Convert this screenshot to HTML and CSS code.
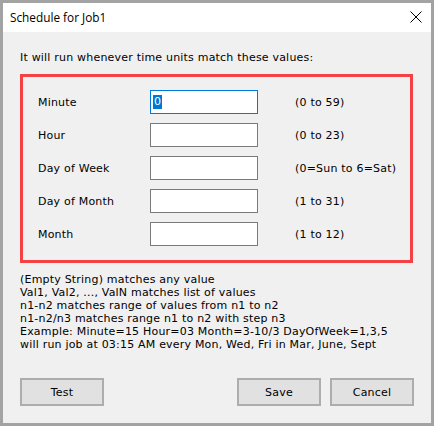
FILE: index.html
```html
<!DOCTYPE html>
<html>
<head>
<meta charset="utf-8">
<link rel="stylesheet" href="styles.css">
</head>
<body>
<div class="window">
  <div class="titlebar">
    <span class="title">Schedule for Job1</span>
    <svg class="close" width="12" height="12" viewBox="0 0 12 12"><path d="M0.5 0.5 L11.5 11.5 M11.5 0.5 L0.5 11.5" stroke="#000" stroke-width="1" fill="none"/></svg>
  </div>
  <div class="content">
    <div class="intro">It will run whenever time units match these values:</div>
    <div class="fields">
      <div class="row"><span class="label">Minute</span><div class="input focused"><span class="sel">0</span></div><span class="range">(0 to 59)</span></div>
      <div class="row"><span class="label">Hour</span><div class="input"></div><span class="range">(0 to 23)</span></div>
      <div class="row"><span class="label">Day of Week</span><div class="input"></div><span class="range">(0=Sun to 6=Sat)</span></div>
      <div class="row"><span class="label">Day of Month</span><div class="input"></div><span class="range">(1 to 31)</span></div>
      <div class="row"><span class="label">Month</span><div class="input"></div><span class="range">(1 to 12)</span></div>
    </div>
    <div class="help">
      <div>(Empty String) matches any value</div>
      <div>Val1, Val2, ..., ValN matches list of values</div>
      <div>n1-n2 matches range of values from n1 to n2</div>
      <div>n1-n2/n3 matches range n1 to n2 with step n3</div>
      <div>Example: Minute=15 Hour=03 Month=3-10/3 DayOfWeek=1,3,5</div>
      <div>will run job at 03:15 AM every Mon, Wed, Fri in Mar, June, Sept</div>
    </div>
    <div class="buttons">
      <button class="btn">Test</button>
      <div class="spacer"></div>
      <button class="btn">Save</button>
      <button class="btn">Cancel</button>
    </div>
  </div>
</div>
</body>
</html>
```
FILE: styles.css
```css
html, body {
  margin: 0;
  padding: 0;
}
body {
  width: 434px;
  height: 426px;
  background: #9d9d9d;
}
.window {
  box-sizing: border-box;
  width: 434px;
  height: 426px;
  border: 3px solid #a3a3a3;
  display: flex;
  flex-direction: column;
  font-family: "DejaVu Sans", Verdana, sans-serif;
  font-size: 11px;
  letter-spacing: 0.2px;
  color: #000;
}
.titlebar {
  height: 29px;
  background: #fff;
  display: flex;
  align-items: center;
  padding-left: 7px;
  padding-right: 9px;
}
.title {
  font-family: "Open Sans", "Noto Sans", sans-serif;
  font-size: 11.8px;
  letter-spacing: 0;
  flex: 1;
  padding-bottom: 1px;
}
.close {
  display: block;
  margin-top: -1px;
}
.content {
  flex: 1;
  background: #f0f0f0;
  padding: 19px 17px 17px 17px;
  display: flex;
  flex-direction: column;
}
.intro {
  height: 13px;
  line-height: 13px;
}
.fields {
  margin-top: 10px;
  margin-right: 1px;
  border: 3px solid #f44244;
  height: 189px;
  box-sizing: border-box;
  padding: 13px 0 0 15px;
  display: flex;
  flex-direction: column;
  gap: 9px;
}
.row {
  display: flex;
  align-items: center;
  height: 24px;
}
.label {
  width: 112px;
  flex: none;
}
.input {
  box-sizing: border-box;
  width: 108px;
  height: 24px;
  flex: none;
  background: #fff;
  border: 1px solid #7a7a7a;
  display: flex;
  align-items: center;
  padding-left: 2px;
}
.input.focused {
  border-color: #0078d7;
}
.sel {
  background: #0078d7;
  color: #fff;
  line-height: 14px;
  padding: 0 1px;
}
.range {
  margin-left: 37px;
}
.help {
  margin-top: 10px;
  line-height: 13px;
}
.buttons {
  margin-top: auto;
  display: flex;
  gap: 9px;
}
.spacer {
  flex: 1;
}
.btn {
  box-sizing: border-box;
  width: 84px;
  height: 28px;
  background: #e1e1e1;
  border: 2px solid #adadad;
  font-family: "DejaVu Sans", Verdana, sans-serif;
  font-size: 11px;
  letter-spacing: 0.2px;
  color: #000;
  padding: 0;
  margin: 0;
}
```
